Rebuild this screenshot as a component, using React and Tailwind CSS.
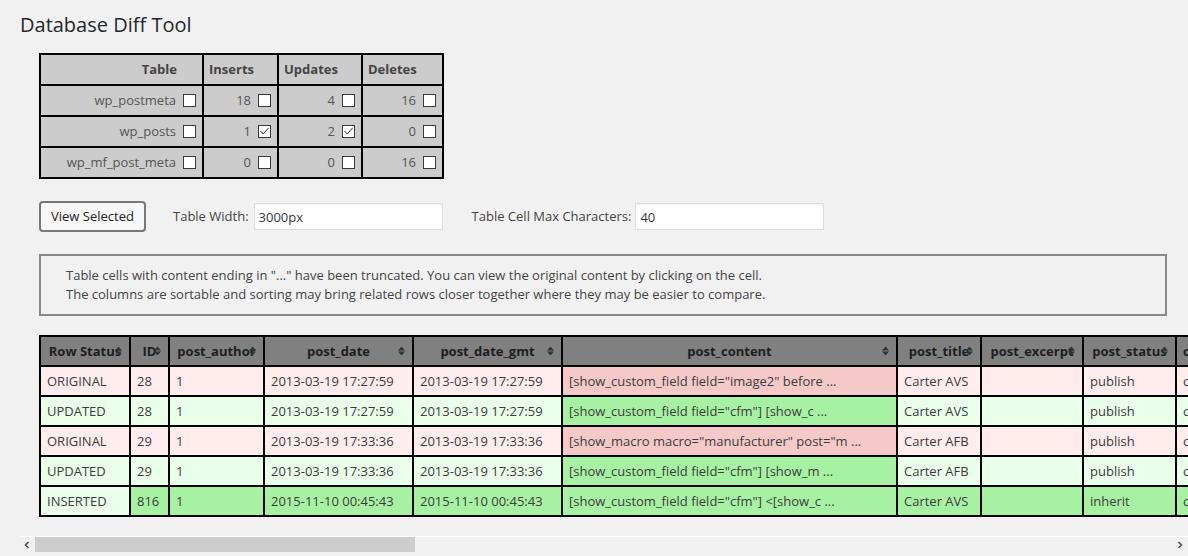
import React from "react";

const summaryRows = [
  { name: "wp_postmeta", ins: 18, upd: 4, del: 16, insOn: false, updOn: false },
  { name: "wp_posts", ins: 1, upd: 2, del: 0, insOn: true, updOn: true },
  { name: "wp_mf_post_meta", ins: 0, upd: 0, del: 16, insOn: false, updOn: false },
];

const columns = [
  { name: "Row Status", w: "w-[90px]" },
  { name: "ID", w: "w-[39px]" },
  { name: "post_author", w: "w-[95px]" },
  { name: "post_date", w: "w-[149px]" },
  { name: "post_date_gmt", w: "w-[149px]" },
  { name: "post_content", w: "w-[335px]" },
  { name: "post_title", w: "w-[84px]" },
  { name: "post_excerpt", w: "w-[102px]" },
  { name: "post_status", w: "w-[93px]" },
  { name: "comment_status", w: "w-[120px]" },
  { name: "ping_status", w: "w-[100px]" },
  { name: "post_password", w: "w-[120px]" },
  { name: "post_name", w: "w-[220px]" },
  { name: "to_ping", w: "w-[80px]" },
];

// o = original, u = updated, i = inserted
const rows = [
  {
    kind: "o",
    cells: ["ORIGINAL", "28", "1", "2013-03-19 17:27:59", "2013-03-19 17:27:59", '[show_custom_field field="image2" before ...', "Carter AVS", "", "publish", "closed", "closed", "", "carter-avs", ""],
  },
  {
    kind: "u",
    cells: ["UPDATED", "28", "1", "2013-03-19 17:27:59", "2013-03-19 17:27:59", '[show_custom_field field="cfm"] [show_c ...', "Carter AVS", "", "publish", "closed", "closed", "", "carter-avs", ""],
  },
  {
    kind: "o",
    cells: ["ORIGINAL", "29", "1", "2013-03-19 17:33:36", "2013-03-19 17:33:36", '[show_macro macro="manufacturer" post="m ...', "Carter AFB", "", "publish", "closed", "closed", "", "carter-afb", ""],
  },
  {
    kind: "u",
    cells: ["UPDATED", "29", "1", "2013-03-19 17:33:36", "2013-03-19 17:33:36", '[show_custom_field field="cfm"] [show_m ...', "Carter AFB", "", "publish", "closed", "closed", "", "carter-afb", ""],
  },
  {
    kind: "i",
    cells: ["INSERTED", "816", "1", "2015-11-10 00:45:43", "2015-11-10 00:45:43", '[show_custom_field field="cfm"] <[show_c ...', "Carter AVS", "", "inherit", "closed", "closed", "", "28-revision-v1", ""],
  },
];

const cellBg = (kind, idx) => {
  if (kind === "o") return idx === 5 ? "bg-[#f6c9c9]" : "bg-[#ffecec]";
  if (kind === "u") return idx === 5 ? "bg-[#a7f2a2]" : "bg-[#eaffea]";
  return idx === 0 ? "bg-[#eaffea]" : "bg-[#a7f2a2]";
};

const Box = ({ checked }) => (
  <span className="inline-block w-[13px] h-[13px] border border-[#3a3a3a] bg-white shrink-0">
    {checked && (
      <svg className="block w-full h-full" viewBox="0 0 11 11">
        <polyline points="1.5,5 4.2,8 9.5,2" fill="none" stroke="#333" strokeWidth="1" />
      </svg>
    )}
  </span>
);

const SortIcon = () => (
  <svg className="absolute right-[7px] top-1/2 -translate-y-1/2" width="7" height="9" viewBox="0 0 7 9">
    <polygon points="0,4 3.5,0 7,4" fill="#2e3535" />
    <polygon points="0,5 3.5,9 7,5" fill="#2e3535" />
  </svg>
);

const App = () => {
  return (
    <div className="min-h-screen overflow-hidden bg-[#f1f1f1] pl-[20px] pt-[11px] font-['Open_Sans',sans-serif] text-[13px] text-[#444]">
      <h1 className="text-[20px] leading-[27px] font-normal text-[#23282d]">Database Diff Tool</h1>

      {/* summary */}
      <table className="mt-[15px] ml-[19px] w-[403px] table-fixed border-collapse">
        <colgroup>
          <col className="w-[163px]" />
          <col className="w-[75px]" />
          <col className="w-[84px]" />
          <col className="w-[81px]" />
        </colgroup>
        <thead>
          <tr className="bg-[#cccccc]">
            <th className="border-2 border-black py-[6px] pr-[25px] text-right font-bold leading-[17px] text-[#444]">Table</th>
            <th className="border-2 border-black py-[6px] pl-[5px] text-left font-bold leading-[17px] text-[#444]">Inserts</th>
            <th className="border-2 border-black py-[6px] pl-[5px] text-left font-bold leading-[17px] text-[#444]">Updates</th>
            <th className="border-2 border-black py-[6px] pl-[5px] text-left font-bold leading-[17px] text-[#444]">Deletes</th>
          </tr>
        </thead>
        <tbody>
          {summaryRows.map((r) => (
            <tr key={r.name} className="bg-[#cccccc] text-[#555]">
              <td className="border-2 border-black py-[6px] pr-[6px] leading-[17px]">
                <div className="flex items-center justify-end gap-[7px]">
                  {r.name}
                  <Box />
                </div>
              </td>
              <td className="border-2 border-black py-[6px] pr-[6px] leading-[17px]">
                <div className="flex items-center justify-end gap-[7px]">
                  {r.ins}
                  <Box checked={r.insOn} />
                </div>
              </td>
              <td className="border-2 border-black py-[6px] pr-[6px] leading-[17px]">
                <div className="flex items-center justify-end gap-[7px]">
                  {r.upd}
                  <Box checked={r.updOn} />
                </div>
              </td>
              <td className="border-2 border-black py-[6px] pr-[6px] leading-[17px]">
                <div className="flex items-center justify-end gap-[7px]">
                  {r.del}
                  <Box />
                </div>
              </td>
            </tr>
          ))}
        </tbody>
      </table>

      {/* options */}
      <div className="mt-[22px] ml-[19px] flex items-center">
        <button className="h-[31px] w-[107px] rounded-[4px] border-2 border-[#777] bg-[#f7f7f7] text-[13px] text-[#222]">
          View Selected
        </button>
        <label className="ml-[27px] text-[#444]">Table Width:</label>
        <input
          readOnly
          value="3000px"
          className="ml-[5px] h-[27px] w-[189px] border border-[#ddd] bg-white px-[4px] text-[13px] text-[#32373c] shadow-[inset_0_1px_2px_rgba(0,0,0,0.07)] outline-none"
        />
        <label className="ml-[29px] text-[#444]">Table Cell Max Characters:</label>
        <input
          readOnly
          value="40"
          className="ml-[4px] h-[27px] w-[189px] border border-[#ddd] bg-white px-[4px] text-[13px] text-[#32373c] shadow-[inset_0_1px_2px_rgba(0,0,0,0.07)] outline-none"
        />
      </div>

      {/* notice */}
      <div className="mt-[22px] ml-[19px] mr-[21px] border-2 border-[#888] py-[10px] pl-[25px] leading-[19px] text-[#444]">
        <p>Table cells with content ending in "..." have been truncated. You can view the original content by clicking on the cell.</p>
        <p>The columns are sortable and sorting may bring related rows closer together where they may be easier to compare.</p>
      </div>

      {/* diff table */}
      <div className="mt-[19px] overflow-hidden">
        <table className="ml-[19px] mb-[19px] w-[1776px] table-fixed border-collapse">
          <colgroup>
            {columns.map((c) => (
              <col key={c.name} className={c.w} />
            ))}
          </colgroup>
          <thead>
            <tr className="bg-[#808080]">
              {columns.map((c) => (
                <th
                  key={c.name}
                  className="relative overflow-hidden whitespace-nowrap border-2 border-black px-[6px] py-[5px] text-center font-bold leading-[18px] text-[#1e1e1e]"
                >
                  {c.name}
                  <SortIcon />
                </th>
              ))}
            </tr>
          </thead>
          <tbody>
            {rows.map((r, ri) => (
              <tr key={ri}>
                {r.cells.map((v, ci) => (
                  <td
                    key={ci}
                    className={`overflow-hidden whitespace-nowrap border-2 border-black px-[6px] py-[5px] text-left leading-[18px] text-[#3c3c3c] ${cellBg(r.kind, ci)}`}
                  >
                    {v}
                  </td>
                ))}
              </tr>
            ))}
          </tbody>
        </table>

        {/* scrollbar */}
        <div className="-ml-px flex h-[18px] items-start border-t border-white bg-[#f1f1f1]">
          <div className="flex h-[15px] w-[16px] items-center justify-center">
            <svg width="6" height="8" viewBox="0 0 6 8">
              <polyline points="4.5,1 1.5,4 4.5,7" fill="none" stroke="#505050" strokeWidth="1.6" />
            </svg>
          </div>
          <div className="h-[15px] w-[380px] bg-[#cdcdcd]" />
          <div className="flex-1" />
          <div className="flex h-[15px] w-[16px] items-center justify-center">
            <svg width="6" height="8" viewBox="0 0 6 8">
              <polyline points="1.5,1 4.5,4 1.5,7" fill="none" stroke="#505050" strokeWidth="1.6" />
            </svg>
          </div>
        </div>
      </div>
    </div>
  );
};

export default App;
